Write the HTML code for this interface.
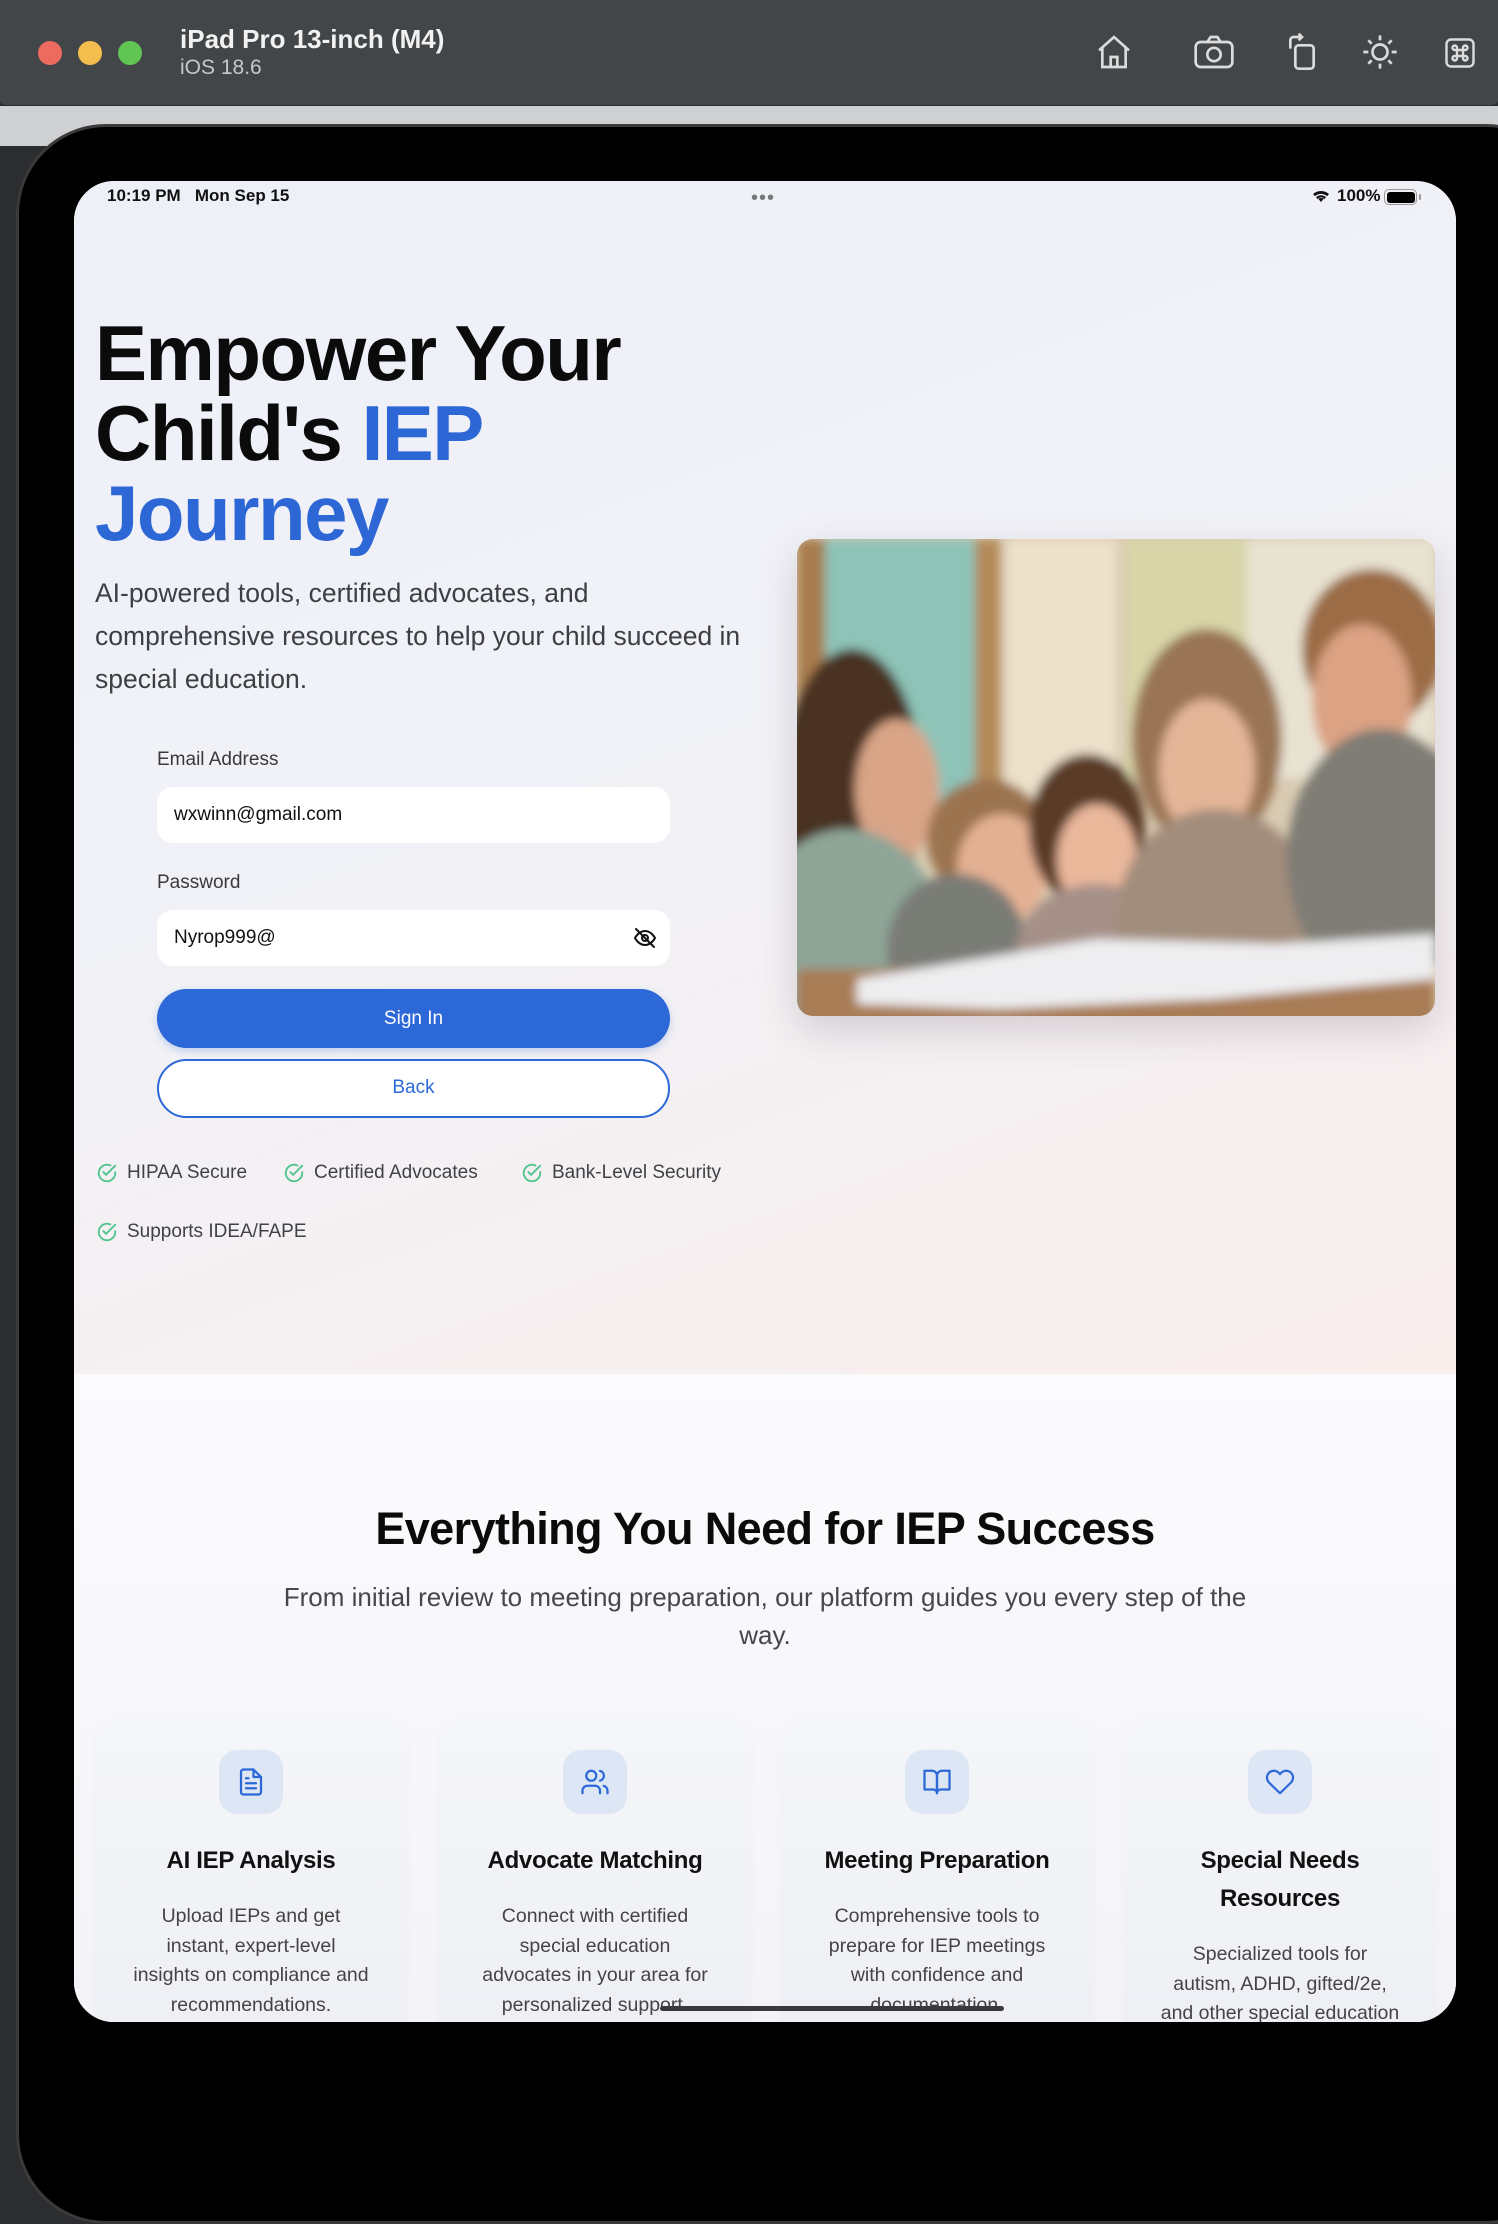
<!DOCTYPE html>
<html><head><meta charset="utf-8">
<style>
*{margin:0;padding:0;box-sizing:border-box}
body{width:1498px;height:2072px;overflow:hidden;background:#2b2d2f;font-family:"Liberation Sans",sans-serif;position:relative}
.abs{position:absolute}
#bar{left:0;top:0;width:1498px;height:106px;background:#434648;border-bottom:1px solid #2a2c2d;border-radius:0 0 6px 6px}
.dot{width:24px;height:24px;border-radius:50%;top:41px}
#strip{left:0;top:106px;width:1498px;height:40px;background:#cfd0d2}
#bezel{left:16px;top:124px;width:1560px;height:2100px;background:#000;border-radius:90px;border:3px solid #3a3a3c}
#screen{left:74px;top:181px;width:1382px;height:1841px;border-radius:40px;overflow:hidden;background:#f6f6f9}
#hero{left:0;top:0;width:1382px;height:1193px;background:linear-gradient(160deg,#eef0f8 0%,#f1f2f7 45%,#f6eff0 80%,#f8eeec 100%)}
.h1{font-weight:700;font-size:78px;line-height:80px;letter-spacing:-1.5px;color:#0b0b0c}
.blue{color:#2d67d6}
.lbl{font-size:19px;color:#3a3a3c}
.inp{background:#fff;border-radius:16px;height:56px;width:513px;left:83px;font-size:19px;color:#111;padding-left:17px;line-height:56px}
.badge{font-size:19px;color:#3f4246;display:flex;align-items:center;gap:9px}
.card{top:1536px;width:312px;height:400px;border-radius:26px;background:linear-gradient(180deg,#f5f6f9,#eceef3);box-shadow:0 2px 8px rgba(0,0,0,0.03)}
.ib{position:absolute;left:124px;top:33px;width:64px;height:64px;border-radius:18px;background:#dde6f5;display:flex;align-items:center;justify-content:center}
.ct{position:absolute;left:0;width:312px;text-align:center;font-size:24px;font-weight:700;color:#111;letter-spacing:-0.3px;line-height:38px}
.cd{position:absolute;left:6px;width:300px;text-align:center;font-size:19.5px;color:#444;line-height:29.5px;white-space:nowrap}
</style></head><body>
<div id="bar" class="abs">
 <div class="abs dot" style="left:38px;background:#ec6a5e"></div>
 <div class="abs dot" style="left:78px;background:#f4be4f"></div>
 <div class="abs dot" style="left:118px;background:#61c554"></div>
 <div class="abs" style="left:180px;top:24px;font-size:26px;font-weight:700;color:#f2f2f2">iPad Pro 13-inch (M4)</div>
 <div class="abs" style="left:180px;top:56px;font-size:21px;color:#c8c8c8">iOS 18.6</div>
 <svg class="abs" style="left:1094px;top:32px" width="40" height="40" viewBox="0 0 24 24" fill="none" stroke="#dcdcdc" stroke-width="1.6"><path d="M3 11L12 3l9 8M5 9.5V21h14V9.5M10 21v-6h4v6"/></svg>
 <svg class="abs" style="left:1192px;top:32px" width="44" height="40" viewBox="0 0 26 24" fill="none" stroke="#dcdcdc" stroke-width="1.6"><rect x="2" y="6" width="22" height="15" rx="3"/><path d="M9 6l2-3h4l2 3"/><circle cx="13" cy="13.5" r="4"/></svg>
 <svg class="abs" style="left:1284px;top:32px" width="36" height="40" viewBox="0 0 20 24" fill="none" stroke="#dcdcdc" stroke-width="1.6"><rect x="6" y="8" width="11" height="14" rx="2"/><path d="M3 10V5a2 2 0 0 1 2-2h5M8 1l2 2-2 2"/></svg>
 <svg class="abs" style="left:1360px;top:32px" width="40" height="40" viewBox="0 0 24 24" fill="none" stroke="#dcdcdc" stroke-width="1.6"><circle cx="12" cy="12" r="4.5"/><path d="M12 2v3M12 19v3M2 12h3M19 12h3M5 5l2 2M17 17l2 2M5 19l2-2M17 7l2-2"/></svg>
 <svg class="abs" style="left:1442px;top:34px" width="36" height="38" viewBox="0 0 24 24" fill="none" stroke="#dcdcdc" stroke-width="1.6"><rect x="3" y="3" width="18" height="18" rx="3"/><path d="M10 10h4v4h-4zM10 10H8.5a1.5 1.5 0 1 1 1.5-1.5zM14 10V8.5A1.5 1.5 0 1 1 15.5 10zM10 14v1.5A1.5 1.5 0 1 1 8.5 14zM14 14h1.5a1.5 1.5 0 1 1-1.5 1.5z"/></svg>
</div>
<div id="strip" class="abs"></div>
<div id="bezel" class="abs"></div>
<div id="screen" class="abs">
 <div id="hero" class="abs"></div>
 <div class="abs" style="left:33px;top:5px;font-size:17px;color:#111;font-weight:700">10:19 PM&nbsp;&nbsp; Mon Sep 15</div>
 <div class="abs" style="left:677px;top:12px;font-size:20px;color:#777;letter-spacing:1px;line-height:10px">•••</div>
 <svg class="abs" style="left:1237px;top:7px" width="20" height="16" viewBox="0 0 20 16"><path d="M10 14l3-3.5a4.5 4.5 0 0 0-6 0z M2 6a12 12 0 0 1 16 0l-2 2.2a9 9 0 0 0-12 0z M5 9.2a7.5 7.5 0 0 1 10 0l-1.8 2a5 5 0 0 0-6.4 0z" fill="#111"/></svg>
 <div class="abs" style="left:1263px;top:5px;font-size:17px;color:#111;font-weight:700">100%</div>
 <div class="abs" style="left:1310px;top:8px;width:33px;height:16px;border:1.5px solid #999;border-radius:5px;padding:1.5px"><div style="width:100%;height:100%;background:#000;border-radius:3px"></div></div>
 <div class="abs" style="left:1345px;top:13px;width:2px;height:6px;background:#999;border-radius:1px"></div>

 <div class="abs h1" style="left:21px;top:132px">Empower Your<br>Child's <span class="blue">IEP</span><br><span class="blue">Journey</span></div>
 <div class="abs" style="left:21px;top:391px;width:680px;font-size:26.5px;line-height:43px;color:#3d3f44">AI-powered tools, certified advocates, and comprehensive resources to help your child succeed in special education.</div>

 <div class="abs lbl" style="left:83px;top:568px">Email Address</div>
 <div class="abs inp" style="top:606px">wxwinn@gmail.com</div>
 <div class="abs lbl" style="left:83px;top:691px">Password</div>
 <div class="abs inp" style="top:729px">Nyrop999@</div>
 <svg class="abs" style="left:559px;top:745px" width="24" height="24" viewBox="0 0 24 24" fill="none" stroke="#111" stroke-width="2" stroke-linecap="round"><path d="M2 12s3.5-7 10-7 10 7 10 7-3.5 7-10 7S2 12 2 12z"/><circle cx="12" cy="12" r="3"/><path d="M3 3l18 18"/></svg>
 <div class="abs" style="left:83px;top:808px;width:513px;height:59px;border-radius:30px;background:#2d68d8;color:#fff;font-size:19px;text-align:center;line-height:59px;box-shadow:0 3px 8px rgba(45,104,216,0.25)">Sign In</div>
 <div class="abs" style="left:83px;top:878px;width:513px;height:59px;border-radius:30px;background:#fff;border:2.5px solid #2d68d8;color:#2d68d8;font-size:19px;text-align:center;line-height:54px">Back</div>

 <div class="abs badge" style="left:22px;top:981px"><svg width="22" height="22" viewBox="0 0 24 24" fill="none" stroke="#4fc48c" stroke-width="2" stroke-linecap="round"><path d="M21 11v1a9 9 0 1 1-5.3-8.2"/><path d="M8 11l3 3 10-10"/></svg>HIPAA Secure</div>
 <div class="abs badge" style="left:209px;top:981px"><svg width="22" height="22" viewBox="0 0 24 24" fill="none" stroke="#4fc48c" stroke-width="2" stroke-linecap="round"><path d="M21 11v1a9 9 0 1 1-5.3-8.2"/><path d="M8 11l3 3 10-10"/></svg>Certified Advocates</div>
 <div class="abs badge" style="left:447px;top:981px"><svg width="22" height="22" viewBox="0 0 24 24" fill="none" stroke="#4fc48c" stroke-width="2" stroke-linecap="round"><path d="M21 11v1a9 9 0 1 1-5.3-8.2"/><path d="M8 11l3 3 10-10"/></svg>Bank-Level Security</div>
 <div class="abs badge" style="left:22px;top:1040px"><svg width="22" height="22" viewBox="0 0 24 24" fill="none" stroke="#4fc48c" stroke-width="2" stroke-linecap="round"><path d="M21 11v1a9 9 0 1 1-5.3-8.2"/><path d="M8 11l3 3 10-10"/></svg>Supports IDEA/FAPE</div>

 <div class="abs" style="left:723px;top:358px;width:638px;height:477px;border-radius:16px;overflow:hidden;box-shadow:0 14px 40px rgba(60,40,60,0.18)">
  <svg width="638" height="477" viewBox="0 0 638 477">
   <defs><filter id="b" x="-20%" y="-20%" width="140%" height="140%"><feGaussianBlur stdDeviation="5"/></filter></defs>
   <rect width="638" height="477" fill="#d9cbb2"/>
   <g filter="url(#b)">
    <rect x="0" y="0" width="30" height="300" fill="#a77c4e"/>
    <rect x="28" y="0" width="150" height="300" fill="#8ec3b7"/>
    <rect x="178" y="0" width="25" height="300" fill="#b48a58"/>
    <rect x="210" y="0" width="110" height="300" fill="#ede1cb"/>
    <rect x="330" y="0" width="120" height="240" fill="#d8d6a8"/>
    <rect x="450" y="0" width="188" height="240" fill="#e8e2d2"/>
    <ellipse cx="55" cy="250" rx="70" ry="140" fill="#4a3124"/>
    <ellipse cx="100" cy="250" rx="42" ry="70" fill="#d9a487"/>
    <ellipse cx="50" cy="400" rx="95" ry="110" fill="#8ea597"/>
    <ellipse cx="190" cy="300" rx="60" ry="60" fill="#9b7350"/>
    <ellipse cx="205" cy="330" rx="45" ry="55" fill="#e4b093"/>
    <ellipse cx="160" cy="410" rx="70" ry="75" fill="#7a7c76"/>
    <ellipse cx="290" cy="290" rx="58" ry="75" fill="#5a3b28"/>
    <ellipse cx="300" cy="320" rx="40" ry="55" fill="#eab79b"/>
    <ellipse cx="300" cy="410" rx="80" ry="65" fill="#a59088"/>
    <ellipse cx="410" cy="200" rx="75" ry="110" fill="#9a7555"/>
    <ellipse cx="410" cy="230" rx="48" ry="70" fill="#e5b598"/>
    <ellipse cx="420" cy="380" rx="100" ry="110" fill="#a28d7b"/>
    <ellipse cx="575" cy="110" rx="70" ry="80" fill="#9b6c44"/>
    <ellipse cx="565" cy="160" rx="50" ry="75" fill="#dba283"/>
    <ellipse cx="585" cy="320" rx="95" ry="130" fill="#7f7d74"/>
    <rect x="0" y="430" width="638" height="60" fill="#a87c55"/>
    <path d="M60 440 L300 400 L480 405 L638 395 L638 440 L420 460 L200 470 L60 465z" fill="#eeeef0"/>
   </g>
  </svg>
 </div>

 <div class="abs" style="left:0;top:1193px;width:1382px;height:660px;background:linear-gradient(180deg,#fbfbfd,#f4f4f8)"></div>
 <div class="abs" style="left:0;top:1322px;width:1382px;text-align:center;font-size:45px;font-weight:700;color:#0b0b0c;letter-spacing:-0.6px">Everything You Need for IEP Success</div>
 <div class="abs" style="left:186px;top:1397px;width:1010px;text-align:center;font-size:26px;line-height:38px;color:#45474c">From initial review to meeting preparation, our platform guides you every step of the way.</div>

 <div class="abs card" style="left:21px">
  <div class="ib"><svg width="30" height="30" viewBox="0 0 24 24" fill="none" stroke="#2d68d8" stroke-width="1.8" stroke-linecap="round" stroke-linejoin="round"><path d="M14 2H6a2 2 0 0 0-2 2v16a2 2 0 0 0 2 2h12a2 2 0 0 0 2-2V8z"/><path d="M14 2v6h6M16 13H8M16 17H8M10 9H8"/></svg></div>
  <div class="ct" style="top:125px">AI IEP Analysis</div>
  <div class="cd" style="top:185px">Upload IEPs and get<br>instant, expert-level<br>insights on compliance and<br>recommendations.</div>
 </div>
 <div class="abs card" style="left:365px">
  <div class="ib"><svg width="30" height="30" viewBox="0 0 24 24" fill="none" stroke="#2d68d8" stroke-width="1.8" stroke-linecap="round" stroke-linejoin="round"><path d="M16 21v-2a4 4 0 0 0-4-4H6a4 4 0 0 0-4 4v2"/><circle cx="9" cy="7" r="4"/><path d="M22 21v-2a4 4 0 0 0-3-3.9M16 3.1a4 4 0 0 1 0 7.8"/></svg></div>
  <div class="ct" style="top:125px">Advocate Matching</div>
  <div class="cd" style="top:185px">Connect with certified<br>special education<br>advocates in your area for<br>personalized support.</div>
 </div>
 <div class="abs card" style="left:707px">
  <div class="ib"><svg width="30" height="30" viewBox="0 0 24 24" fill="none" stroke="#2d68d8" stroke-width="1.8" stroke-linecap="round" stroke-linejoin="round"><path d="M2 3h6a4 4 0 0 1 4 4v14a3 3 0 0 0-3-3H2z"/><path d="M22 3h-6a4 4 0 0 0-4 4v14a3 3 0 0 1 3-3h7z"/></svg></div>
  <div class="ct" style="top:125px">Meeting Preparation</div>
  <div class="cd" style="top:185px">Comprehensive tools to<br>prepare for IEP meetings<br>with confidence and<br>documentation.</div>
 </div>
 <div class="abs card" style="left:1050px">
  <div class="ib"><svg width="30" height="30" viewBox="0 0 24 24" fill="none" stroke="#2d68d8" stroke-width="1.8" stroke-linecap="round" stroke-linejoin="round"><path d="M20.8 4.6a5.5 5.5 0 0 0-7.8 0L12 5.7l-1-1.1a5.5 5.5 0 0 0-7.8 7.8l1 1L12 21l7.8-7.6 1-1a5.5 5.5 0 0 0 0-7.8z"/></svg></div>
  <div class="ct" style="top:125px">Special Needs<br>Resources</div>
  <div class="cd" style="top:223px">Specialized tools for<br>autism, ADHD, gifted/2e,<br>and other special education</div>
 </div>
 <div class="abs" style="left:586px;top:1825px;width:344px;height:5px;border-radius:3px;background:#3a3a3c"></div>
</div>
</body></html>
